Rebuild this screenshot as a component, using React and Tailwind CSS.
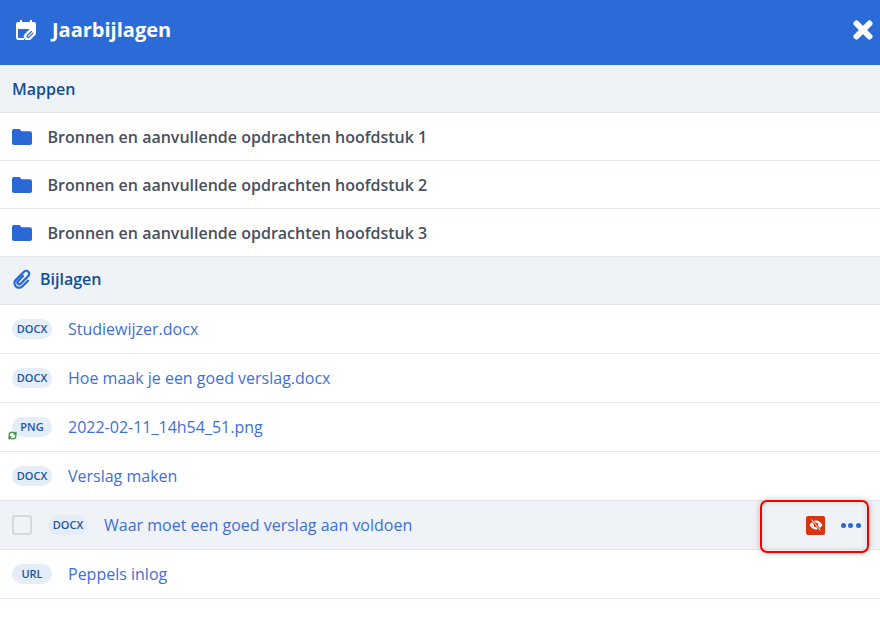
import React from 'react';
import { RefreshCw } from 'lucide-react';

const FOLDERS = [
    'Bronnen en aanvullende opdrachten hoofdstuk 1',
    'Bronnen en aanvullende opdrachten hoofdstuk 2',
    'Bronnen en aanvullende opdrachten hoofdstuk 3',
];

const FolderIcon = () => (
    <svg viewBox="0 0 20 16" className="w-[20px] h-[16px] shrink-0 fill-[#2a68d8]">
        <path d="M2 0h5.5l2 2.2H18a2 2 0 0 1 2 2V14a2 2 0 0 1-2 2H2a2 2 0 0 1-2-2V2a2 2 0 0 1 2-2z" />
    </svg>
);

const CalendarClip = () => (
    <svg viewBox="0 0 20 20" className="w-[20px] h-[20px] shrink-0">
        <path d="M4 0h2v2h8V0h2v2h2a2 2 0 0 1 2 2v5H0V4a2 2 0 0 1 2-2h2z" fill="white" />
        <path d="M1 8v9.500A1.500 1.500 0 0 0 2.500 19H8" fill="none" stroke="white" strokeWidth="2" />
        <path d="M19 8v2" fill="none" stroke="white" strokeWidth="2" />
        <rect x="7" y="10.500" width="14" height="8" rx="4" transform="rotate(-45 14 14.500)" fill="white" />
        <path d="M15.500 11.500l-4 4a1.100 1.100 0 0 0 1.600 1.600l4-4" fill="none" stroke="#2a6bd7" strokeWidth="1.200" strokeLinecap="round" />
    </svg>
);

const ClipIcon = () => (
    <svg viewBox="0 0 20 20" className="w-[20px] h-[20px] shrink-0" fill="none" stroke="#2a68d8" strokeWidth="2.300" strokeLinecap="round">
        <path d="M11 7L6 12.200a1.800 1.800 0 0 0 2.600 2.600L16.300 7a3 3 0 0 0-4.300-4.300L3.700 11a4.600 4.600 0 0 0 6.500 6.500L16 11.700" />
    </svg>
);

const HiddenIcon = () => (
    <svg viewBox="0 0 14 12" className="w-[14px] h-[12px]">
        <path d="M0.500 6C2.500 2.800 4.700 1.500 7 1.500S11.500 2.800 13.500 6C11.500 9.200 9.300 10.500 7 10.500S2.500 9.200 0.500 6z" fill="white" />
        <circle cx="7" cy="6" r="2.300" fill="#d6350f" />
        <path d="M2.500 0.500L11.500 11.500" stroke="#d6350f" strokeWidth="2.400" />
        <path d="M2.500 0.500L11.500 11.500" stroke="white" strokeWidth="1" />
    </svg>
);

const Badge = ({ label }) => (
    <span className="w-[40px] h-[20px] shrink-0 rounded-full bg-[#e5edf9] text-[#1a56a0] text-[11px] font-semibold flex items-center justify-center">
        {label}
    </span>
);

const FileRow = ({ type, name, synced }) => (
    <div className="h-[49px] flex items-center px-3 gap-4 border-b border-[#e3e6ea] bg-white">
        <div className="relative flex">
            <Badge label={type} />
            {synced && (
                <span className="absolute left-[-5px] bottom-[-3px] w-[10px] h-[10px] rounded-full bg-white flex items-center justify-center">
                    <RefreshCw size={9} strokeWidth={3.5} className="text-[#2f8f3f]" />
                </span>
            )}
        </div>
        <span className="text-[16px] text-[#3f6fd6]">{name}</span>
    </div>
);

export default function App() {
    return (
        <div className="relative w-[880px] h-[631px] bg-white overflow-hidden" style={{ fontFamily: '"Open Sans", sans-serif' }}>
            {/* Header */}
            <div className="h-[65px] bg-[#2a6bd7] flex items-center justify-between pl-4 pr-[7px] pb-[5px] text-white">
                <div className="flex items-center gap-4">
                    <CalendarClip />
                    <span className="text-[20px] font-bold leading-none">Jaarbijlagen</span>
                </div>
                <svg viewBox="0 0 20 20" className="w-[20px] h-[20px]">
                    <path d="M3.500 3.500L16.500 16.500M16.500 3.500L3.500 16.500" stroke="white" strokeWidth="6" strokeLinecap="round" />
                </svg>
            </div>

            {/* Mappen */}
            <div className="h-[48px] flex items-center px-3 bg-[#eff2f6] border-b border-[#e0e4e9]">
                <span className="text-[16px] font-semibold text-[#0f4f99]">Mappen</span>
            </div>
            {FOLDERS.map((f) => (
                <div key={f} className="h-[48px] flex items-center px-3 gap-[15.5px] border-b border-[#e3e6ea]">
                    <FolderIcon />
                    <span className="text-[16px] font-semibold text-[#4a4f5c]">{f}</span>
                </div>
            ))}

            {/* Bijlagen */}
            <div className="h-[48px] flex items-center px-3 pb-[4px] gap-2 bg-[#eff2f6] border-b border-[#e0e4e9]">
                <ClipIcon />
                <span className="text-[16px] font-semibold text-[#0f4f99]">Bijlagen</span>
            </div>
            <FileRow type="DOCX" name="Studiewijzer.docx" />
            <FileRow type="DOCX" name="Hoe maak je een goed verslag.docx" />
            <FileRow type="PNG" name="2022-02-11_14h54_51.png" synced />
            <FileRow type="DOCX" name="Verslag maken" />

            {/* Hover row */}
            <div className="h-[49px] flex items-center px-3 gap-4 border-b border-[#e3e6ea] bg-[#eff2f6]">
                <span className="w-[20px] h-[20px] shrink-0 rounded-[3px] border-2 border-[#d3d9e0] bg-[#eff2f6]" />
                <Badge label="DOCX" />
                <span className="text-[16px] text-[#3f6fd6]">Waar moet een goed verslag aan voldoen</span>
                <div className="ml-auto flex items-center gap-[15.5px] pr-[7.5px]">
                    <span className="w-[19px] h-[19px] rounded-[2px] bg-[#d6350f] flex items-center justify-center">
                        <HiddenIcon />
                    </span>
                    <span className="flex gap-[2.5px]">
                        <i className="w-[5px] h-[5px] rounded-full bg-[#2a68d8]" />
                        <i className="w-[5px] h-[5px] rounded-full bg-[#2a68d8]" />
                        <i className="w-[5px] h-[5px] rounded-full bg-[#2a68d8]" />
                    </span>
                </div>
            </div>

            <FileRow type="URL" name="Peppels inlog" />

            {/* Annotation */}
            <div className="absolute left-[760px] top-[500px] w-[109px] h-[53px] rounded-[7px] border-2 border-[#f00000] shadow-[0_0_6px_rgba(0,0,0,0.25),inset_0_0_6px_rgba(0,0,0,0.12)]" />
        </div>
    );
}
